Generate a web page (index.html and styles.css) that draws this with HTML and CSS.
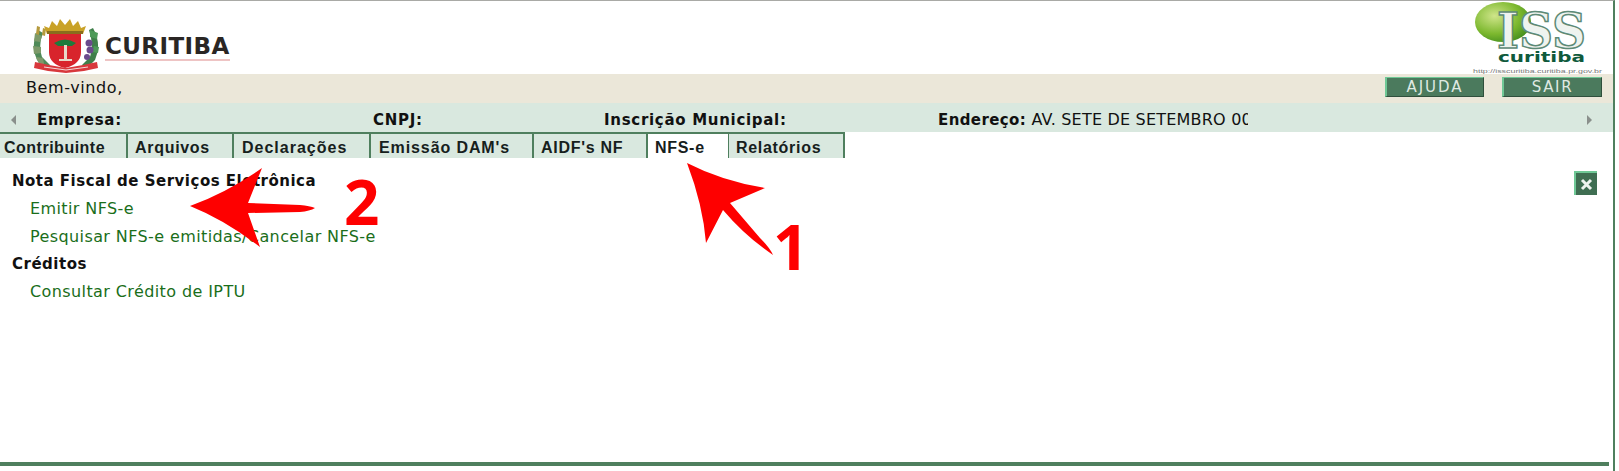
FILE: index.html
```html
<!DOCTYPE html>
<html lang="pt-BR">
<head>
    <meta charset="UTF-8">
    <title>ISS Curitiba</title>
    <link rel="stylesheet" href="styles.css">
</head>
<body>
    <div class="page">
        <header class="top">
            <div class="brand">
                <svg class="coat" viewBox="0 0 68 56" width="68" height="56">
                    <!-- louros -->
                    <path d="M6 12q-8 16-1 30l9 9 4-4-8-8q-4-12 1-24z" fill="#4f8a58"/>
                    <path d="M3 15l7 3-2 6-6-1zM1 28l8 1 0 6-7 1zM4 39l7 1 1 6-5 0z" fill="#7d9a6a"/>
                    <path d="M5 8l3 1-1 8-3-1zM11 10l3 1-1 7-3-1z" fill="#b59a3d"/>
                    <path d="M61 10q9 16 2 32l-9 9-4-4 8-8q4-12-1-27z" fill="#3f7f4a"/>
                    <path d="M58 12l8 3-1 6-7-2zM62 28l5 1-1 6-6-1z" fill="#4d9a58"/>
                    <circle cx="57" cy="25" r="3.500" fill="#6a4a8c"/>
                    <circle cx="58" cy="32" r="3.500" fill="#6a4a8c"/>
                    <circle cx="55" cy="39" r="3" fill="#6a4a8c"/>
                    <!-- coroa -->
                    <path d="M12 8l3 8h36l3-8-5 2-3-7-5 5-3-7-5 6-5-6-3 7-5-5-3 7z" fill="#c9a227"/>
                    <path d="M15 13h36v3H15z" fill="#8a6d1c"/>
                    <!-- escudo -->
                    <path d="M17 16h32v18q0 12-16 16Q17 46 17 34z" fill="#d8242c"/>
                    <path d="M22 25q11-7 22 0l-4 3H26z" fill="#1e7a3c"/>
                    <rect x="32" y="27" width="3" height="15" fill="#e8d8c8"/>
                    <rect x="27" y="41" width="13" height="2" fill="#e8d8c8"/>
                    <!-- faixa -->
                    <path d="M3 44l14 3 17 3 17-3 14-3 1 6-14 3-18 2-18-2-14-3z" fill="#d8383c"/>
                    <path d="M12 49l22 3 22-3" stroke="#f4d8d8" stroke-width="1" fill="none"/>
                </svg>
                <div class="brand-name">CURITIBA</div>
            </div>
            <div class="iss-logo">
                <svg viewBox="0 0 150 73" width="150" height="73">
                    <defs>
                        <radialGradient id="ball" cx="0.35" cy="0.35" r="0.75">
                            <stop offset="0" stop-color="#cfe58a"/>
                            <stop offset="0.6" stop-color="#7cb82e"/>
                            <stop offset="1" stop-color="#3f8a1c"/>
                        </radialGradient>
                    </defs>
                    <ellipse cx="40" cy="21" rx="28" ry="20" fill="url(#ball)"/>
                    <text class="iss-mark" x="34" y="47" textLength="89" lengthAdjust="spacingAndGlyphs">ISS</text>
                    <text class="iss-city" x="35" y="61" textLength="87" lengthAdjust="spacingAndGlyphs">curitiba</text>
                    <text class="iss-url" x="10" y="72" textLength="129" lengthAdjust="spacingAndGlyphs">http://isscuritiba.curitiba.pr.gov.br</text>
                </svg>
            </div>
        </header>

        <div class="welcome">
            <span class="welcome-text">Bem-vindo,</span>
            <div class="actions">
                <a class="btn btn-help">AJUDA</a>
                <a class="btn btn-exit">SAIR</a>
            </div>
        </div>

        <div class="company">
            <span class="scroll-arrow left"></span>
            <span class="field field-empresa"><b>Empresa:</b></span>
            <span class="field field-cnpj"><b>CNPJ:</b></span>
            <span class="field field-inscricao"><b>Inscrição Municipal:</b></span>
            <span class="field field-endereco"><b class="label-tight">Endereço:</b> AV. SETE DE SETEMBRO 000</span>
            <span class="scroll-arrow right"></span>
        </div>

        <nav>
            <ul class="tabs">
                <li class="tab tab-1">Contribuinte</li>
                <li class="tab tab-2">Arquivos</li>
                <li class="tab tab-3">Declarações</li>
                <li class="tab tab-4">Emissão DAM's</li>
                <li class="tab tab-5">AIDF's NF</li>
                <li class="tab tab-6 active">NFS-e</li>
                <li class="tab tab-7">Relatórios</li>
            </ul>
        </nav>

        <section class="content">
            <div class="menu">
                <h3>Nota Fiscal de Serviços Eletrônica</h3>
                <a href="#emitir">Emitir NFS-e</a>
                <a href="#pesquisar">Pesquisar NFS-e emitidas/Cancelar NFS-e</a>
                <h3>Créditos</h3>
                <a href="#credito">Consultar Crédito de IPTU</a>
            </div>
            <button class="close-btn" aria-label="Fechar">
                <svg viewBox="0 0 13 13" width="13" height="13">
                    <path d="M2 2l9 9M11 2l-9 9" stroke="#eef4ef" stroke-width="3"/>
                </svg>
            </button>
        </section>

        <footer class="bottom-line"></footer>
    </div>

    <!-- setas vermelhas por cima da tela -->
    <svg class="marks" viewBox="0 0 1619 471" width="1619" height="471">
        <path d="M687 163Q722 181 765 188L730 203L760 238Q770 248 773 255Q745 236 723 210L706 243Q703 205 687 163z" fill="#fe0000"/>
        <path d="M190 206Q228 192 262 168L248 203L300 205Q310 206 315 208Q310 211 300 212L248 213L260 247Q225 220 190 206z" fill="#fe0000"/>
    </svg>
    <span class="mark-num num-1">1</span>
    <span class="mark-num num-2">2</span>
</body>
</html>
```

FILE: styles.css
```css
body {
    margin: 0;
    background-color: #fff;
    font-family: "DejaVu Sans", sans-serif;
    color: #111;
    overflow: hidden;
}

.page {
    width: 1613px;
    height: 465px;
    padding-bottom: 5px;
    border-top: 1px solid #a9aaa6;
    border-right: 2px solid #4f7f5e;
    display: flex;
    flex-direction: column;
}

.top {
    height: 73px;
    display: flex;
    justify-content: space-between;
    flex-shrink: 0;
}

.brand {
    display: flex;
    padding: 17px 0 0 32px;
}

.coat {
    filter: blur(0.4px);
}

.brand-name {
    font-weight: bold;
    font-size: 23px;
    line-height: 24px;
    letter-spacing: 0.4px;
    color: #2a2624;
    margin: 16px 0 0 5px;
    height: 25px;
    border-bottom: 2px solid #eec4c4;
}

.iss-logo svg {
    display: block;
}

.iss-mark {
    font-family: "DejaVu Serif", serif;
    font-weight: bold;
    font-size: 48px;
    fill: #eef3ef;
    stroke: #5d8a76;
    stroke-width: 1.500;
}

.iss-city {
    font-weight: bold;
    font-size: 14px;
    fill: #0f5a3c;
}

.iss-url {
    font-family: "Liberation Sans", sans-serif;
    font-size: 6px;
    fill: #777;
}

.welcome {
    height: 29px;
    background-color: #ebe7d9;
    display: flex;
    justify-content: space-between;
    flex-shrink: 0;
    font-size: 16px;
    letter-spacing: 0.6px;
}

.welcome-text {
    padding: 4px 0 0 26px;
}

.actions {
    display: flex;
    gap: 18px;
    padding: 3px 11px 0 0;
}

.btn {
    height: 18px;
    line-height: 18px;
    text-align: center;
    background-color: #4b7a5d;
    color: #dfe9e2;
    font-size: 15px;
    border-left: 2px solid #6fc896;
    border-top: 1px solid #6fc896;
    border-right: 1px solid #2f4f3c;
    border-bottom: 1px solid #2f4f3c;
}

.btn-help {
    width: 96px;
    letter-spacing: 2px;
}

.btn-exit {
    width: 97px;
    letter-spacing: 1.600px;
}

.company {
    height: 29px;
    background-color: #d9e8df;
    display: flex;
    align-items: center;
    font-size: 16px;
    letter-spacing: 0.2px;
    flex-shrink: 0;
}

.company b {
    font-size: 15px;
    letter-spacing: 0.7px;
}

.company b.label-tight {
    letter-spacing: 0.4px;
}

.field {
    white-space: nowrap;
    overflow: hidden;
    padding-top: 3px;
}

.field-empresa {
    width: 336px;
}

.field-cnpj {
    width: 231px;
}

.field-inscricao {
    width: 334px;
}

.field-endereco {
    width: 310px;
}

.scroll-arrow {
    width: 0;
    height: 0;
    border-top: 5px solid transparent;
    border-bottom: 5px solid transparent;
    margin-top: 4px;
}

.scroll-arrow.left {
    border-right: 5px solid #8a8f8c;
    margin-left: 11px;
    margin-right: 21px;
}

.scroll-arrow.right {
    border-left: 5px solid #8a8f8c;
    margin-left: 339px;
}

.tabs {
    list-style-type: none;
    margin: 0;
    padding: 0;
    display: flex;
    height: 26px;
    flex-shrink: 0;
    font-family: "Liberation Sans", sans-serif;
    font-weight: bold;
    font-size: 16px;
}

.tab {
    background-color: #d9e8df;
    color: #16201c;
    border-top: 2px solid #4f7f5e;
    border-right: 2px solid #4f7f5e;
    box-sizing: border-box;
    line-height: 27px;
    padding-left: 7px;
    letter-spacing: 0.7px;
}

.tab-1 {
    width: 128px;
    padding-left: 4px;
    letter-spacing: 0.5px;
}

.tab-2 {
    width: 106px;
}

.tab-3 {
    width: 137px;
    padding-left: 8px;
    letter-spacing: 1px;
}

.tab-4 {
    width: 163px;
    padding-left: 8px;
    letter-spacing: 0.9px;
}

.tab-5 {
    width: 114px;
}

.tab-6 {
    width: 81px;
}

.tab-7 {
    width: 116px;
}

.tab.active {
    background-color: #fff;
    border-right-width: 1px;
}

.content {
    flex: 1;
    display: flex;
    justify-content: space-between;
    align-items: flex-start;
}

.menu {
    padding: 10px 0 0 12px;
}

.menu h3 {
    margin: 0;
    font-size: 15px;
    line-height: 27px;
    letter-spacing: 0.5px;
}

.menu a {
    display: block;
    line-height: 28px;
    padding-left: 18px;
    font-size: 16px;
    letter-spacing: 0.4px;
    color: #1a6e1a;
    text-decoration: none;
}

.close-btn {
    width: 23px;
    height: 24px;
    margin: 13px 16px 0 0;
    padding: 0;
    display: flex;
    align-items: center;
    justify-content: center;
    background-color: #3f6e52;
    border: none;
    border-top: 2px solid #6fc896;
    border-left: 2px solid #6fc896;
}

.bottom-line {
    height: 4px;
    margin-right: 4px;
    background-color: #4f7f5e;
    flex-shrink: 0;
}

.marks {
    position: absolute;
    left: 0;
    top: 0;
}

.mark-num {
    position: absolute;
    font-family: "Open Sans", sans-serif;
    font-weight: bold;
    font-size: 62px;
    line-height: 46px;
    color: #fe0000;
}

.num-1 {
    left: 773px;
    top: 223px;
}

.num-2 {
    left: 344px;
    top: 178px;
}
```
